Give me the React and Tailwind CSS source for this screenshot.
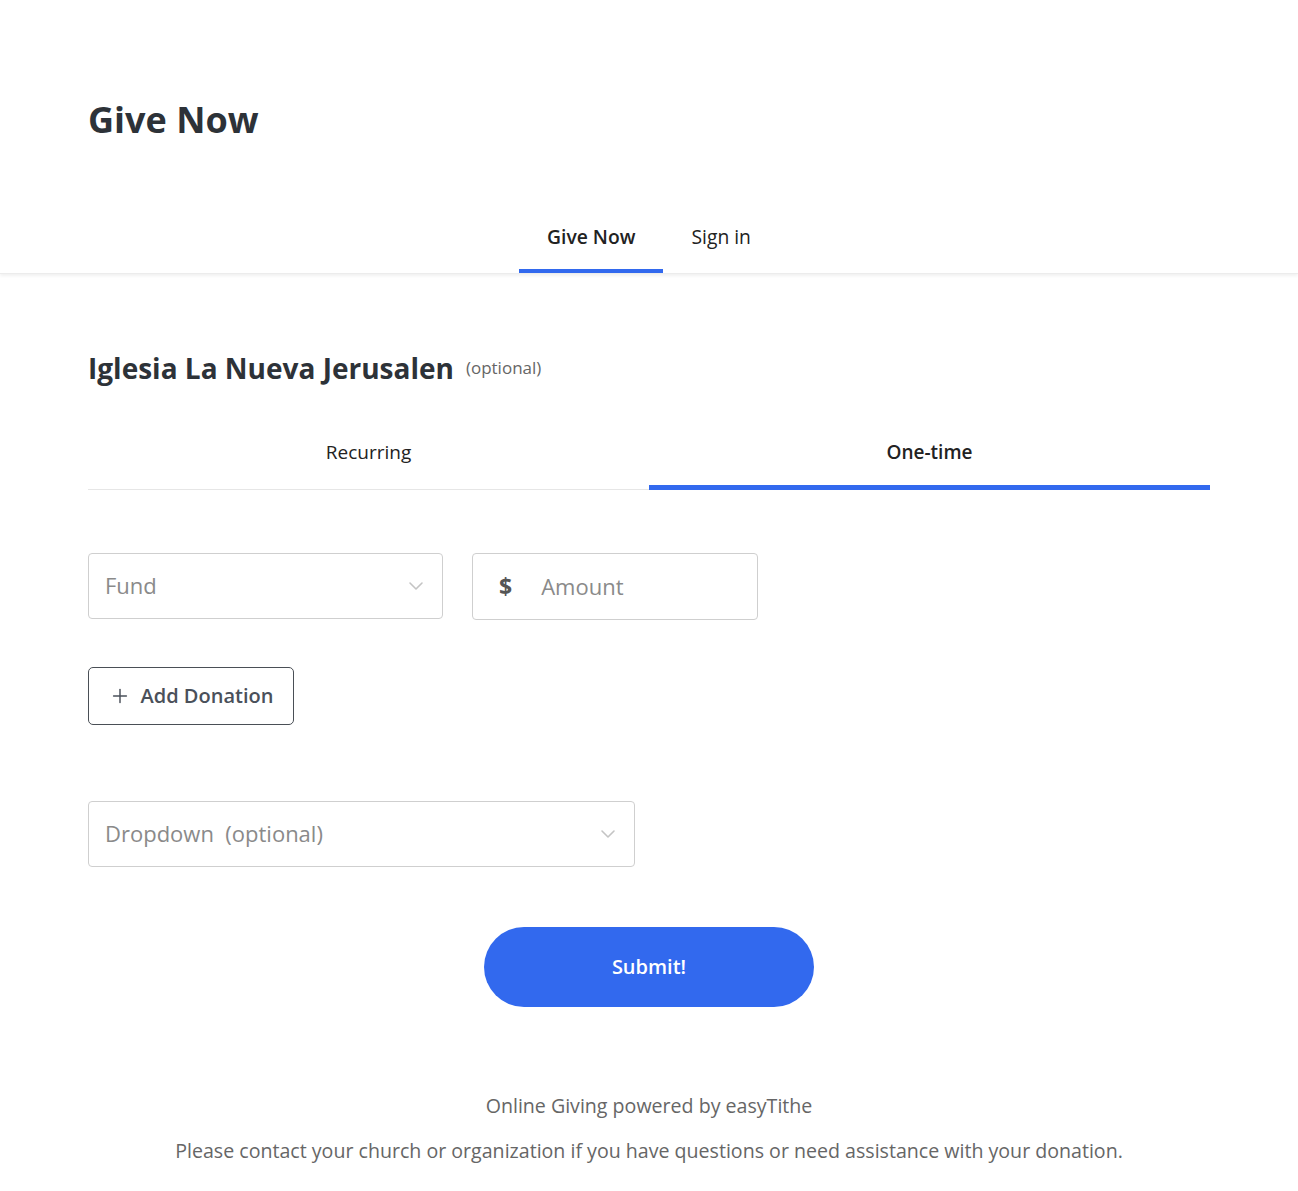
import { ChevronDown, Plus } from 'lucide-react';

function Field({ label, className }) {
  return (
    <div className={`flex h-[66px] items-center justify-between rounded-[4px] border border-[#cfcfcf] pl-4 pr-[14px] ${className}`}>
      <span className="text-[22px] text-[#8a8a8a]">{label}</span>
      <ChevronDown className="h-6 w-6 text-[#c4c4c4]" strokeWidth={1.6} />
    </div>
  );
}

export default function App() {
  return (
    <div className="min-h-screen bg-white font-['Open_Sans',sans-serif] text-[#2b3036]">
      <div className="px-[88px] pt-[98px]">
        <h1 className="text-[36px] font-bold leading-[1.2] text-[#2d3238]">Give Now</h1>
      </div>

      <nav className="mt-[72px] flex justify-center shadow-[0_2px_3px_rgba(0,0,0,0.06)] border-b border-[#ececec]">
        <a href="#" className="border-b-4 border-[#3269ee] px-[28px] pb-[17px] pt-[10px] text-[19.3px] font-semibold text-[#222]">Give Now</a>
        <a href="#" className="border-b-4 border-transparent px-[28px] pb-[17px] pt-[10px] text-[19.3px] text-[#222]">Sign in</a>
      </nav>

      <main className="px-[88px]">
        <div className="mt-[73px] flex items-center gap-3">
          <h2 className="text-[28px] font-bold text-[#2d3238]">Iglesia La Nueva Jerusalen</h2>
          <span className="text-[17px] font-medium text-[#666]">(optional)</span>
        </div>

        <div className="mt-[49px] grid grid-cols-2 border-b border-[#e6e6e6]">
          <button className="pb-[18px] pt-0 text-[19px] text-[#222] border-b-[5px] border-transparent -mb-px">Recurring</button>
          <button className="pb-[18px] pt-0 text-[19px] font-semibold text-[#222] border-b-[5px] border-[#3269ee] -mb-px">One-time</button>
        </div>

        <div className="mt-[63px] flex gap-[29px]">
          <Field label="Fund" className="w-[355px]" />
          <div className="flex h-[67px] w-[286px] items-center rounded-[4px] border border-[#cfcfcf] pl-[26px]">
            <span className="text-[23px] font-bold text-[#555]">$</span>
            <span className="ml-[29px] text-[22px] text-[#8a8a8a]">Amount</span>
          </div>
        </div>

        <button className="mt-[47px] flex h-[58px] w-[206px] items-center justify-center gap-[10px] rounded-[5px] border border-[#4a4f56] text-[20px] font-semibold text-[#4a505a]">
          <Plus className="h-[22px] w-[22px]" strokeWidth={1.6} />
          Add Donation
        </button>

        <Field label="Dropdown  (optional)" className="mt-[76px] w-[547px] whitespace-pre" />

        <div className="mt-[60px] flex justify-center">
          <button className="h-[80px] w-[330px] rounded-full bg-[#3269ee] text-[20px] font-semibold text-white">Submit!</button>
        </div>

        <footer className="mt-[84px] pb-10 text-center text-[19.6px] text-[#666]">
          <p>Online Giving powered by easyTithe</p>
          <p className="mt-[16px]">Please contact your church or organization if you have questions or need assistance with your donation.</p>
        </footer>
      </main>
    </div>
  );
}
